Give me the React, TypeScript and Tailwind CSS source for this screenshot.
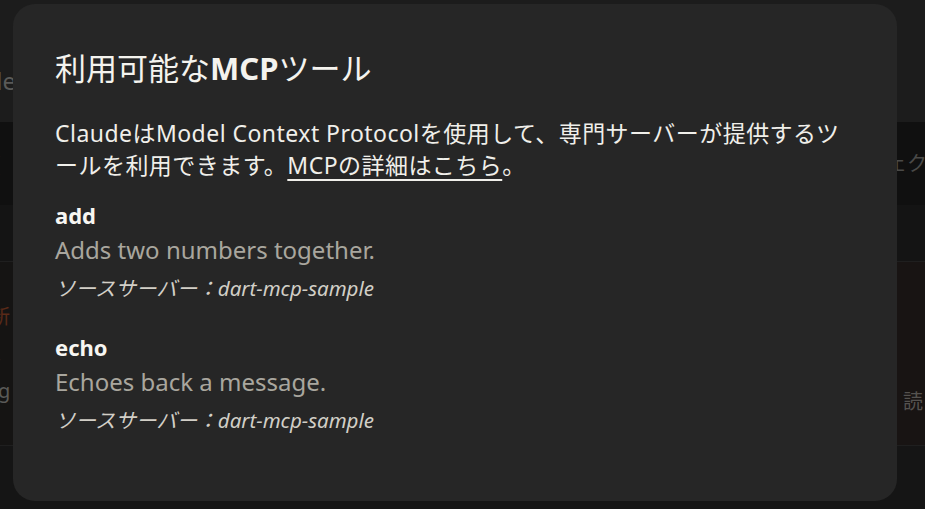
import React from 'react'

const tools = [
  { name: 'add', description: 'Adds two numbers together.', server: 'dart-mcp-sample' },
  { name: 'echo', description: 'Echoes back a message.', server: 'dart-mcp-sample' },
]

const font = { fontFamily: '"Noto Sans", "Noto Sans CJK JP", sans-serif' }

function Backdrop() {
  return (
    <div className="flex h-[509px] w-[925px] flex-col overflow-hidden bg-[#191919] text-[#5a5a58]">
      <div className="flex h-[122px] items-center justify-between bg-[#1c1c1c] pt-[40px]">
        <span className="-ml-[62px] text-[24px]">Claude</span>
      </div>
      <div className="flex h-[83px] items-center justify-between bg-[#101010]">
        <span className="-ml-[6px] text-[22px] text-[#3a3a3a]">(</span>
        <span className="-mr-[2px] text-[20px] text-[#4a4a48]">ェク</span>
      </div>
      <div className="h-[57px] border-b border-[#1f1f1f] bg-[#141414]" />
      <div className="flex h-[183px] bg-[#151413]">
        <div className="flex w-[30px] flex-col justify-center gap-3 text-[20px]">
          <span className="-ml-[10px] text-[#5a2a18]">新</span>
          <span className="-ml-[4px] leading-none">,</span>
          <span className="-ml-[2px]">g</span>
        </div>
        <div className="flex-1" />
        <div className="flex w-[30px] flex-col justify-end bg-[#181413] pb-[28px]">
          <span className="ml-[8px] text-[20px] text-[#55524f]">読</span>
        </div>
      </div>
      <div className="flex-1 border-t border-[#1f1f1f] bg-[#151515]" />
    </div>
  )
}

export default function App() {
  return (
    <div className="relative h-[509px] w-[925px] overflow-hidden" style={font}>
      <Backdrop />
      <div className="absolute left-[13px] top-[4px] h-[497px] w-[884px] rounded-[22px] bg-[#262626] px-[42px] pt-[40px]">
        <h2 className="text-[31px] leading-[48px] font-normal text-[#f4f3ee]">
          利用可能な<span className="font-bold">MCP</span>ツール
        </h2>
        <p className="mt-[25px] text-[23px] leading-[32px] tracking-[0.02em] text-[#f0efea]">
          ClaudeはModel Context Protocolを使用して、専門サーバーが提供するツールを利用できます。
          <a className="underline decoration-2 underline-offset-[5px]">MCPの詳細はこちら</a>。
        </p>
        <div className="mt-[18px] flex flex-col gap-[24px]">
          {tools.map((t) => (
            <div key={t.name} className="flex flex-col">
              <div className="text-[22px] leading-[32px] font-bold text-[#f7f6f2]">{t.name}</div>
              <div className="text-[24px] leading-[38px] text-[#a9a69e]">{t.description}</div>
              <div className="text-[20.5px] leading-[38px] italic text-[#d2cfc7]">
                ソースサーバー：{t.server}
              </div>
            </div>
          ))}
        </div>
      </div>
    </div>
  )
}
